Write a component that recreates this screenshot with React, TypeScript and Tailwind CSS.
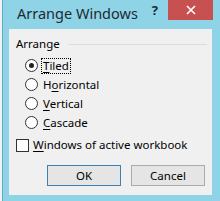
import type { ReactNode } from "react";

const FONT = "font-['Noto_Sans','Liberation_Sans',sans-serif]";

function Mnemonic({ text, index }: { text: string; index: number }) {
  return (
    <>
      {text.slice(0, index)}
      <span className="underline underline-offset-2 decoration-1">{text[index]}</span>
      {text.slice(index + 1)}
    </>
  );
}

function Radio({ checked, children, focused }: { checked?: boolean; children: ReactNode; focused?: boolean }) {
  return (
    <div className="flex h-[19px] items-center">
      <span className="flex h-[13px] w-[13px] items-center justify-center rounded-full border border-[#333] bg-white">
        {checked ? <span className="h-[5px] w-[5px] rounded-full bg-[#222]" /> : null}
      </span>
      <span
        className={`ml-[3px] px-[1px] leading-[14px] ${focused ? "border border-dotted border-black" : "border border-transparent"}`}
      >
        {children}
      </span>
    </div>
  );
}

function Button({ children, primary }: { children: ReactNode; primary?: boolean }) {
  return (
    <button
      type="button"
      className={`flex h-[21px] w-[74px] items-center justify-center border bg-[#e5e5e5] text-[11.5px] text-black ${
        primary ? "border-[#3c7fb1]" : "border-[#acacac]"
      }`}
    >
      {children}
    </button>
  );
}

export default function App() {
  return (
    <div className={`flex h-[201px] w-[220px] overflow-hidden ${FONT}`}>
      <div className="w-[2px] bg-[#f2f2f2]" />
      <div className="flex flex-1 flex-col border-l border-[#5aaec6] bg-[#8fd4e6]">
        <div className="flex h-[29px] items-start">
          <div className="mt-[3px] ml-[14px] text-[14.5px] leading-[20px] text-[#1d2a33]">Arrange Windows</div>
          <div className="mt-[1px] ml-auto text-[13px] font-bold leading-[18px] text-[#1d2a33]">?</div>
          <div className="mr-[7px] ml-[10px] flex h-[20px] w-[45px] items-center justify-center bg-[#c75050]">
            <svg width="10" height="10" viewBox="0 0 10 10">
              <path d="M1 1L9 9M9 1L1 9" stroke="white" strokeWidth="1.6" />
            </svg>
          </div>
        </div>
        <div className="mr-[8px] mb-[6px] ml-[6px] flex flex-1 flex-col bg-[#f0f0f0] pl-[7px] text-[11.5px] text-black">
          <div className="mt-[7px] flex h-[16px] items-center">
            <span className="leading-[16px]">Arrange</span>
            <span className="mr-[5px] ml-[8px] h-[1px] flex-1 bg-[#dcdcdc]" />
          </div>
          <div className="mt-[4px] flex flex-col pl-[9px]">
            <Radio checked focused>
              <Mnemonic text="Tiled" index={0} />
            </Radio>
            <Radio>
              <Mnemonic text="Horizontal" index={1} />
            </Radio>
            <Radio>
              <Mnemonic text="Vertical" index={0} />
            </Radio>
            <Radio>
              <Mnemonic text="Cascade" index={0} />
            </Radio>
          </div>
          <div className="mt-[4px] flex h-[18px] items-center">
            <span className="h-[13px] w-[13px] border border-[#333] bg-white" />
            <span className="ml-[4px]">
              <Mnemonic text="Windows of active workbook" index={0} />
            </span>
          </div>
          <div className="mt-[11px] flex gap-[10px] pl-[31px]">
            <Button primary>OK</Button>
            <Button>Cancel</Button>
          </div>
        </div>
      </div>
    </div>
  );
}
